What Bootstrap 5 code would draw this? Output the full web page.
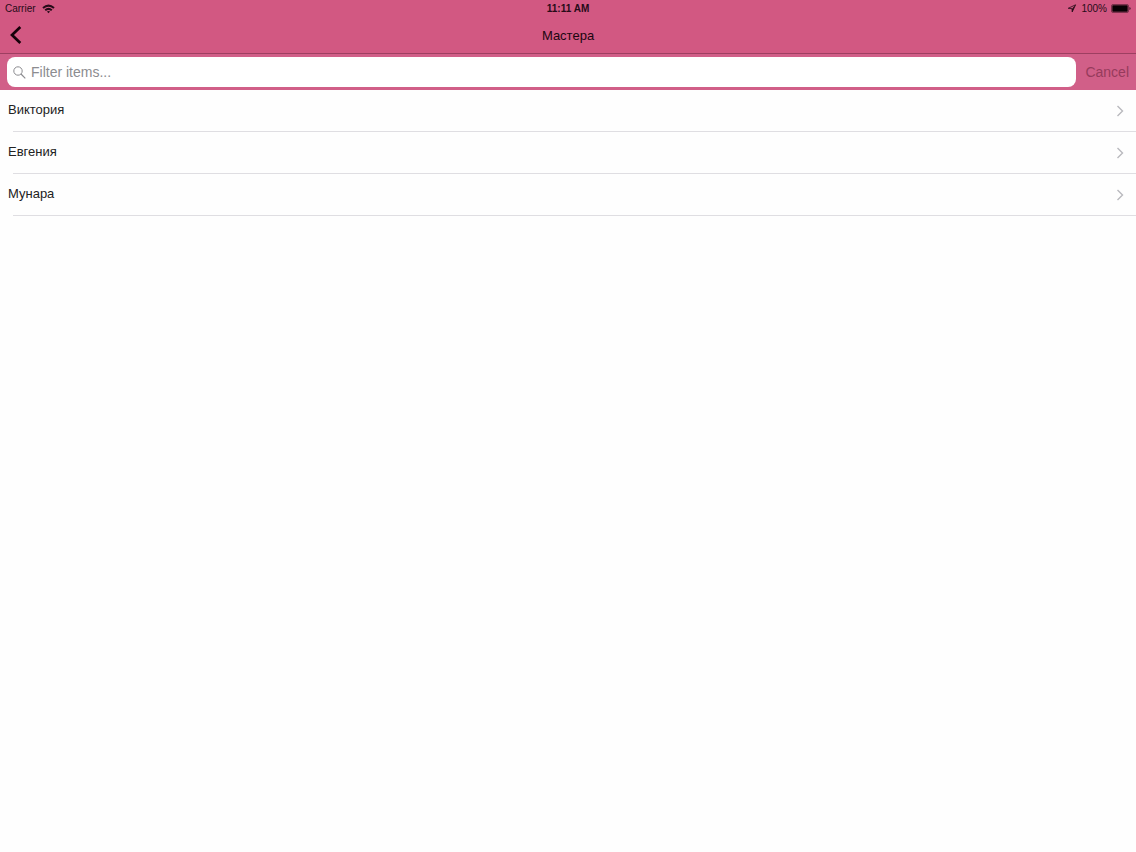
<!DOCTYPE html>
<html lang="ru">
<head>
<meta charset="utf-8">
<meta name="viewport" content="width=device-width, initial-scale=1">
<title>Мастера</title>
<link rel="stylesheet" href="https://cdn.jsdelivr.net/npm/bootstrap@5.3.0/dist/css/bootstrap.min.css">
<style>
body { font-family: "Liberation Sans", Arial, sans-serif; font-size: 13px; line-height: 18px; color: #222; background: #fefefe; }
svg { display: block; flex: none; }
.top-area { background: #d25882; color: #260b18; }
.status-bar { height: 17px; padding: 0 5px; font-size: 10px; line-height: 17px; }
.carrier { gap: 6px; }
.title-bar { height: 37px; padding: 0 8px; border-bottom: 1px solid #9d3f61; color: #1c0610; }
.title-bar h1 { font-size: 13px; line-height: 18px; padding-top: 2px; }
.back-btn { color: #170009; }
.search-bar { padding: 3px 7px; gap: 9px; background: #d15f88; }
.search-field { height: 30px; border-radius: 8px; padding: 0 6px; gap: 5px; color: #8c8c90; }
.search-field input { font-size: 14px; line-height: 20px; outline: none; color: #333; }
.search-field input::placeholder { color: #8c8c90; opacity: 1; }
.cancel-btn { font-size: 14px; line-height: 20px; color: #963b5c; }
.master-row { display: flex; height: 42px; padding: 0 12px 2px 8px; color: #222; position: relative; }
.master-row::after { content: ""; position: absolute; left: 13px; right: 0; bottom: 0; height: 1px; background: #dfdee2; }
.master-row svg { color: #b9b9be; margin-top: 2px; }
</style>
</head>
<body>
<header class="top-area">
  <div class="status-bar row g-0 align-items-center">
    <div class="carrier col d-flex align-items-center">
      <span>Carrier</span>
      <svg width="13" height="10" viewBox="0 0 13 10" fill="none" stroke="currentColor" stroke-width="2" aria-hidden="true"><path d="M1 4Q6.500-.8 12 4M3.200 6.300Q6.500 3.500 9.800 6.300"/><path d="M4.900 7.600Q6.500 6.500 8.100 7.600L6.500 9.300Z" fill="currentColor" stroke="none"/></svg>
    </div>
    <div class="col-auto fw-bold">11:11 AM</div>
    <div class="col d-flex align-items-center justify-content-end gap-1">
      <svg width="10" height="9" viewBox="0 0 10 9" aria-hidden="true"><path d="M1.200 4.300 8.600.8 5.200 8 5 4.700Z" fill="none" stroke="currentColor" stroke-width=".8"/><path d="M8.600.8 5.200 8 5 4.700Z" fill="currentColor"/></svg>
      <span>100%</span>
      <svg width="20" height="9" viewBox="0 0 20 9" aria-hidden="true"><rect x=".5" y=".5" width="17" height="8" rx="1.500" fill="none" stroke="currentColor" stroke-opacity=".5"/><rect x="1.300" y="1.300" width="15.400" height="6.400" rx=".6" fill="#080004"/><path d="M18.500 3v3q1-.3 1-1.500t-1-1.500" fill="currentColor"/></svg>
    </div>
  </div>
  <nav class="title-bar row g-0 align-items-center" aria-label="Навигация">
    <div class="col"><button type="button" class="back-btn btn p-0 border-0" aria-label="Назад"><svg width="16" height="20" viewBox="0 0 16 20" fill="none" stroke="currentColor" stroke-width="2.700"><path d="M12.300 2 4 10l8.300 8"/></svg></button></div>
    <h1 class="col-auto m-0 fw-normal">Мастера</h1>
    <div class="col"></div>
  </nav>
  <form class="search-bar d-flex align-items-center" role="search">
    <label class="search-field bg-white d-flex align-items-center flex-grow-1">
      <svg width="13" height="13" viewBox="0 0 13 13" fill="none" stroke="currentColor" aria-hidden="true"><circle cx="5" cy="5" r="4.200"/><path d="m8 8 4.300 4.300" stroke-width="1.200"/></svg>
      <input type="search" class="border-0 p-0 bg-transparent flex-grow-1" placeholder="Filter items..." aria-label="Filter items">
    </label>
    <button type="button" class="cancel-btn btn p-0 border-0">Cancel</button>
  </form>
</header>
<main>
  <div class="list-group list-group-flush">
    <a href="#" class="master-row align-items-center justify-content-between text-decoration-none"><span>Виктория</span><svg width="8" height="12" viewBox="0 0 8 12" fill="none" stroke="currentColor" stroke-width="1.400" aria-hidden="true"><path d="m1.500 1 5 5-5 5"/></svg></a>
    <a href="#" class="master-row align-items-center justify-content-between text-decoration-none"><span>Евгения</span><svg width="8" height="12" viewBox="0 0 8 12" fill="none" stroke="currentColor" stroke-width="1.400" aria-hidden="true"><path d="m1.500 1 5 5-5 5"/></svg></a>
    <a href="#" class="master-row align-items-center justify-content-between text-decoration-none"><span>Мунара</span><svg width="8" height="12" viewBox="0 0 8 12" fill="none" stroke="currentColor" stroke-width="1.400" aria-hidden="true"><path d="m1.500 1 5 5-5 5"/></svg></a>
  </div>
</main>
<script src="https://cdn.jsdelivr.net/npm/bootstrap@5.3.0/dist/js/bootstrap.bundle.min.js"></script>
</body>
</html>
